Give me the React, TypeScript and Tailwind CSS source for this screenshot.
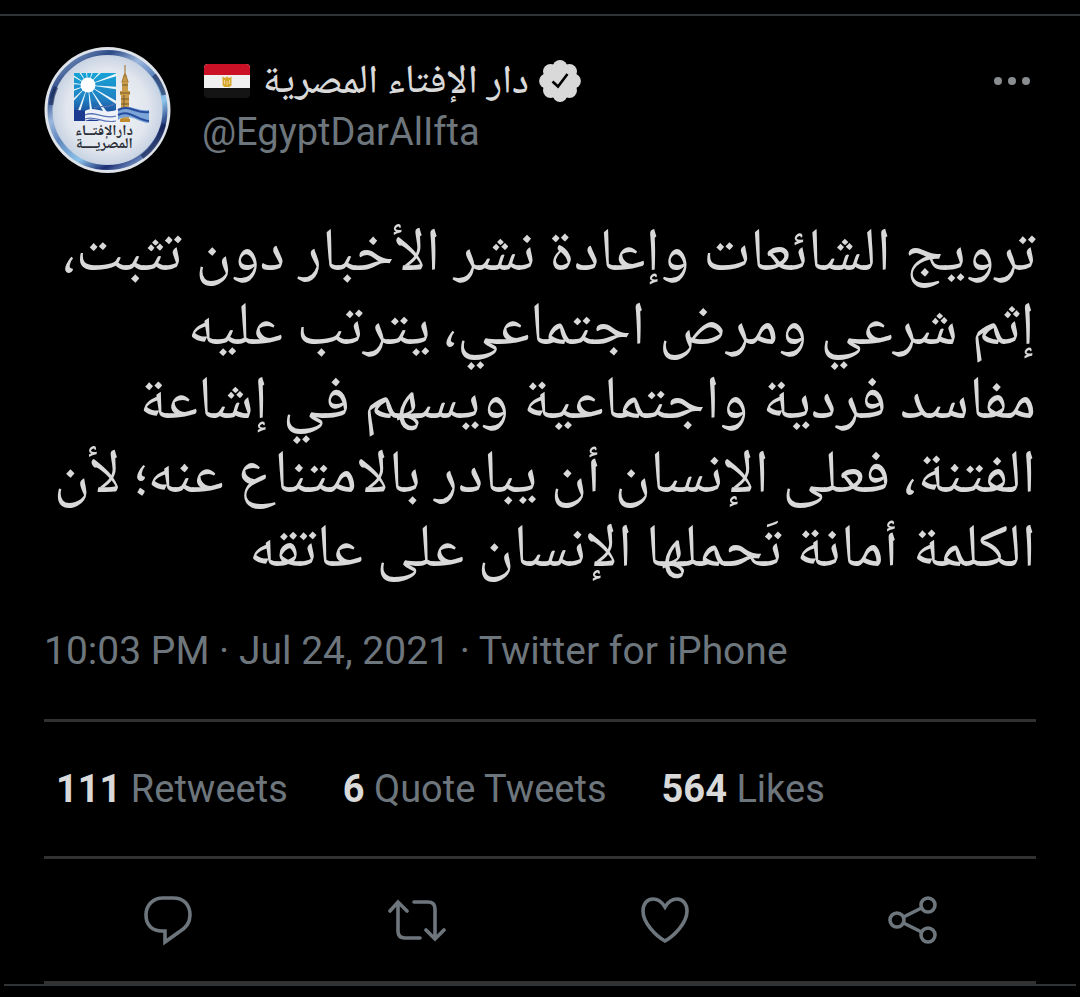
import type { ReactNode } from "react";

const ARABIC = "font-['Noto_Naskh_Arabic_UI','Noto_Naskh_Arabic','DejaVu_Sans',sans-serif]";

const lines = [
  "ترويج الشائعات وإعادة نشر الأخبار دون تثبت،",
  "إثم شرعي ومرض اجتماعي، يترتب عليه",
  "مفاسد فردية واجتماعية ويسهم في إشاعة",
  "الفتنة، فعلى الإنسان أن يبادر بالامتناع عنه؛ لأن",
  "الكلمة أمانة تَحملها الإنسان على عاتقه",
];

const stats = [
  { value: "111", label: "Retweets" },
  { value: "6", label: "Quote Tweets" },
  { value: "564", label: "Likes" },
];

function Avatar() {
  const rays = Array.from({ length: 14 }, (_, i) => (i * 360) / 14 + 6);
  return (
    <svg viewBox="0 0 128 128" className="size-32 shrink-0" role="img" aria-label="دار الإفتاء المصرية">
      <defs>
        <linearGradient id="rim" x1="0.1" y1="0" x2="0.8" y2="1">
          <stop offset="0" stopColor="#8fa8cf" />
          <stop offset="0.2" stopColor="#2c4a86" />
          <stop offset="0.36" stopColor="#9db8de" />
          <stop offset="0.5" stopColor="#5f86bd" />
          <stop offset="0.7" stopColor="#8cc4ea" />
          <stop offset="0.85" stopColor="#1c2f74" />
          <stop offset="1" stopColor="#8fb0dc" />
        </linearGradient>
        <radialGradient id="disc">
          <stop offset="0" stopColor="#f1f3f7" />
          <stop offset="0.7" stopColor="#e2e7ef" />
          <stop offset="1" stopColor="#c3cfe0" />
        </radialGradient>
        <linearGradient id="sky" x1="0" y1="0" x2="0" y2="1">
          <stop offset="0" stopColor="#16a3d6" />
          <stop offset="0.55" stopColor="#2180c2" />
          <stop offset="1" stopColor="#152f83" />
        </linearGradient>
        <clipPath id="square"><rect x="30" y="27" width="42" height="48" /></clipPath>
      </defs>
      <circle cx="63.500" cy="64" r="63" fill="#dfe3ea" />
      <circle cx="63.500" cy="64" r="57.500" fill="url(#disc)" stroke="url(#rim)" strokeWidth="5" />
      <path d="M7 59a57.500 57.500 0 0 1 5-18M110 29a57.500 57.500 0 0 1 10 20M120 78a57.500 57.500 0 0 1-22 33" fill="none" stroke="#14224f" strokeWidth="4.500" opacity=".6" />
      <g clipPath="url(#square)">
        <rect x="30" y="27" width="42" height="48" fill="url(#sky)" />
        {rays.map((a) => (
          <path key={a} d="M44 39L90 37V41Z" fill="#eaf6fc" transform={`rotate(${a} 44 39)`} />
        ))}
        <circle cx="44" cy="39" r="7.500" fill="#fff" />
        <path d="M30 75V64c12-1 20 6 42 5v6Z" fill="#1c3990" />
      </g>
      <path d="M41 65c10-6 18 4 31-1v13c-12 2-20-7-31-2Z" fill="#eef2f8" />
      <path d="M41 69c10-5 18 5 31 1M41 73c10-4 18 5 31 2M50 62c6-4 14 2 21-5" fill="none" stroke="#5874b4" strokeWidth="1.200" />
      <path d="M81 19v8M79 30h4M78 36l3-9 3 9Z" fill="#c79a48" stroke="#a98143" strokeWidth="1.200" />
      <path d="M78 36h6v9h-6ZM76 45h10v4h-10ZM77 49h8v15h-8ZM75 64h12v4h-12ZM77 68h8v7h-8Z" fill="#c99c49" />
      <path d="M78 39h6M76 47h10M77 53h8M77 58h8M75 66h12M80 49v14" stroke="#77592f" strokeWidth="1" />
      <path d="M74 64c10-8 18 2 31 0v13c-11 0-19-11-31-3Z" fill="#7ba4d8" />
      <path d="M74 64c11-6 18 4 31 2M74 69c11-6 19 5 31 6" fill="none" stroke="#274c9c" strokeWidth="2" />
      <rect x="76" y="73" width="10" height="3" fill="#c08a2e" />
      <text x="60" y="91" textAnchor="middle" direction="rtl" fontSize="15" fontWeight="bold" fill="#2b3038" className={ARABIC}>
        <tspan x="60">دارالإفتــاء</tspan>
        <tspan x="60" dy="13">المصريــــة</tspan>
      </text>
    </svg>
  );
}

function EgyptFlag() {
  return (
    <svg viewBox="0 0 46 34" className="h-[34px] w-[46px] shrink-0" role="img" aria-label="Egypt">
      <clipPath id="flag"><rect width="46" height="34" rx="4" /></clipPath>
      <g clipPath="url(#flag)">
        <rect width="46" height="34" fill="#141414" />
        <rect width="46" height="24" fill="#f0f0f0" />
        <rect width="46" height="11" fill="#cb1126" />
      </g>
      <path d="M18.500 12.500l2.500 1.500 2-1.500 2 1.500 2.500-1.500v9l-2 1.500h-5l-2-1.500Z" fill="#d6a72c" />
      <path d="M20.500 16v4M23 17v4M25.500 16v4" stroke="#f3e2ab" strokeWidth=".8" />
    </svg>
  );
}

function VerifiedBadge() {
  const lobes = Array.from({ length: 8 }, (_, i) => (i * Math.PI) / 4);
  return (
    <svg viewBox="0 0 42 42" className="size-[42px] shrink-0" role="img" aria-label="Verified">
      <g fill="#d9d9d9">
        <circle cx="21" cy="21" r="17" />
        {lobes.map((a) => (
          <circle key={a} cx={21 + 13.4 * Math.cos(a)} cy={21 + 13.4 * Math.sin(a)} r="7.500" />
        ))}
      </g>
      <path d="M13.500 21.500l5.500 5L28.500 14" fill="none" stroke="#000" strokeWidth="2.600" />
    </svg>
  );
}

function Action({ label, children }: { label: string; children: ReactNode }) {
  return (
    <button type="button" aria-label={label} className="flex justify-center">
      <svg viewBox="0 0 60 60" className="size-[60px]" fill="none" stroke="#6e767d" strokeWidth="3.600">
        {children}
      </svg>
    </button>
  );
}

export default function App() {
  return (
    <div className="min-h-screen bg-black pt-3.5 font-[Roboto,sans-serif] text-[#d9d9d9]">
      <article className="border-t-2 border-[#2f3336]">
        <div className="px-11">
          <header className="flex items-start pt-[30px]">
            <Avatar />
            <div className="ml-[30px] grow pt-3.5">
              <div className="flex h-[42px] items-center gap-2.5 pl-0.5">
                <EgyptFlag />
                <h1 dir="rtl" className={`ml-0.5 text-[40px] leading-[42px] pt-1 font-medium whitespace-nowrap ${ARABIC}`}>دار الإفتاء المصرية</h1>
                <VerifiedBadge />
              </div>
              <a href="#profile" className="block text-[38px] leading-[60px] text-[#6e767d]">@EgyptDarAlIfta</a>
            </div>
            <button type="button" aria-label="More" className="mt-[29px] mr-1.5">
              <svg viewBox="0 0 36 12" className="h-3 w-9" fill="#8a8d90">
                <circle cx="4" cy="6" r="4" />
                <circle cx="18" cy="6" r="4" />
                <circle cx="32" cy="6" r="4" />
              </svg>
            </button>
          </header>
          <p dir="rtl" lang="ar" className={`mt-11 text-[61px] leading-[74px] whitespace-nowrap ${ARABIC}`}>
            {lines.map((line) => (
              <span key={line} className="block">{line}</span>
            ))}
          </p>
          <p className="mt-[35px] pb-10 text-[39px] leading-[56px] text-[#6e767d]">10:03 PM · Jul 24, 2021 · Twitter for iPhone</p>
          <div className="flex gap-[55px] border-y-3 border-[#2f3133] px-3 py-10 text-[38px] leading-[54px] text-[#6e767d]">
            {stats.map((s) => (
              <a key={s.label} href="#stats"><b className="text-[#d9d9d9]">{s.value}</b> {s.label}</a>
            ))}
          </div>
          <div className="grid grid-cols-4 border-b-3 border-[#2f3133] py-[31px]">
            <Action label="Reply">
              <path d="M25 8h10c11 0 17 7 17 17 0 8-4 13-11 17L27 52V41h-3C14 41 8 35 8 25S15 8 25 8Z" />
            </Action>
            <Action label="Retweet">
              <path strokeLinecap="round" d="M4 21l8-9 9 9M12 13v28q0 7 7 7h15M28 12h14q7 0 7 7v29M40 40l9 9 9-9" />
            </Action>
            <Action label="Like">
              <path d="M31 17C28 12 24 9 19 9 13 9 9 14 9 21c0 12 13 25 22 30 9-5 22-18 22-30C53 14 49 9 43 9c-5 0-9 3-12 8Z" />
            </Action>
            <Action label="Share">
              <circle cx="15" cy="30" r="7" /><circle cx="46" cy="15" r="7" /><circle cx="46" cy="45" r="7" />
              <path d="M21.500 27l18-9M21.500 33l18 9" />
            </Action>
          </div>
        </div>
        <hr className="mx-1 border-t-2 border-[#2f3336]" />
      </article>
    </div>
  );
}
